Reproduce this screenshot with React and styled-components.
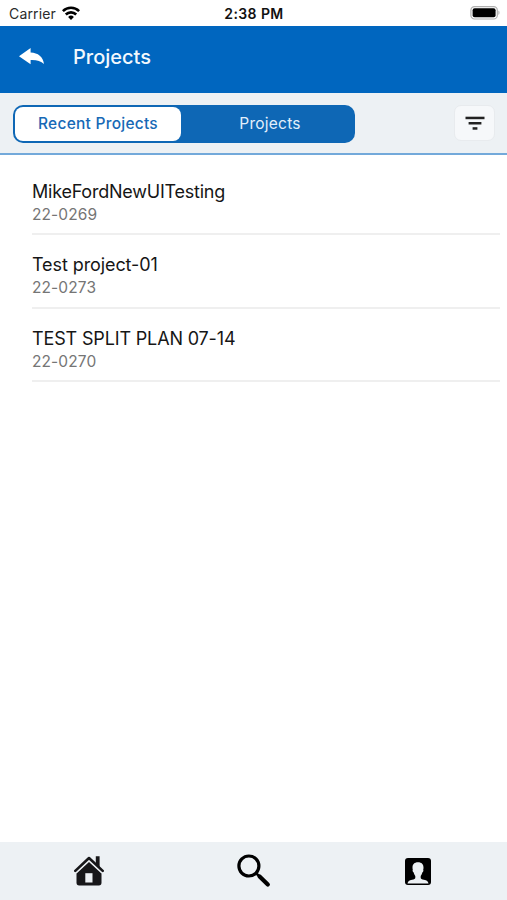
import styled, { createGlobalStyle } from 'styled-components'

const projects = [
	{ name: 'MikeFordNewUITesting', number: '22-0269', spacing: '-0.23px' },
	{ name: 'Test project-01', number: '22-0273', spacing: '-0.09px' },
	{ name: 'TEST SPLIT PLAN 07-14', number: '22-0270', spacing: '-0.15px' },
]

const App = () => {
	return (
		<Screen>
			<GlobalStyle />
			<StatusBar>
				<Carrier>
					<span>Carrier</span>
					<WifiIcon />
				</Carrier>
				<Time>2:38 PM</Time>
				<BatteryIcon />
			</StatusBar>

			<Header>
				<BackIcon />
				<Title>Projects</Title>
			</Header>

			<Toolbar>
				<Segmented>
					<Segment $active>Recent Projects</Segment>
					<Segment>Projects</Segment>
				</Segmented>
				<FilterButton aria-label="Filter">
					<FilterIcon />
				</FilterButton>
			</Toolbar>

			<List>
				{projects.map((project) => (
					<Row key={project.number}>
						<Name $spacing={project.spacing}>{project.name}</Name>
						<Number>{project.number}</Number>
					</Row>
				))}
			</List>

			<TabBar>
				<Tab aria-label="Home">
					<HomeIcon />
				</Tab>
				<Tab aria-label="Search">
					<SearchIcon />
				</Tab>
				<Tab aria-label="Profile">
					<ProfileIcon />
				</Tab>
			</TabBar>
		</Screen>
	)
}
export default App

const WifiIcon = () => (
	<svg width="18" height="14" viewBox="0 0 18 14" fill="none" stroke="#000" strokeWidth="2.6">
		<path d="M0.9 5.1a11.6 11.6 0 0 1 16.2 0" />
		<path d="M3.8 8.5a7.4 7.4 0 0 1 10.4 0" />
		<path d="M9 13.9 6.1 11a4.1 4.1 0 0 1 5.8 0z" fill="#000" stroke="none" />
	</svg>
)

const BatteryIcon = () => (
	<svg width="30" height="14" viewBox="0 0 30 14">
		<rect x="0.9" y="0.6" width="26.4" height="12.4" rx="3.6" fill="#fff" stroke="#b0b0b0" strokeWidth="1.2" />
		<rect x="2.6" y="2.3" width="23" height="9" rx="2" fill="#000" />
		<path d="M28.4 4.6c1.5.6 1.5 3.8 0 4.4z" fill="#b0b0b0" />
	</svg>
)

const BackIcon = () => (
	<svg width="26" height="17" viewBox="0 0 26 17" fill="#fff">
		<path d="M0 8.2 11.6 0v4.4c7.4.2 12.6 4.4 13.4 11.7-3.2-3.4-7.4-4.3-13.4-4.1v4.3z" />
	</svg>
)

const FilterIcon = () => (
	<svg width="20" height="14" viewBox="0 0 20 14" fill="#222">
		<rect x="0.5" y="0.7" width="19" height="2.5" />
		<rect x="3.6" y="6" width="12.8" height="2.5" />
		<rect x="7.6" y="11.2" width="4.8" height="2.5" />
	</svg>
)

const HomeIcon = () => (
	<svg width="30" height="30" viewBox="0 0 30 30" fill="#171719">
		<path d="M15 5.9 27.5 17.6v9.2c0 1.7-.9 2.7-2.6 2.7H5.1c-1.7 0-2.6-1-2.6-2.7v-9.2z" />
		<path d="M1 15.4 15 2.2l14 13.2" fill="none" stroke="#edf1f4" strokeWidth="4.6" />
		<path d="M1.3 14.9 15 2l13.7 12.9" fill="none" stroke="#171719" strokeWidth="2.6" strokeLinecap="round" strokeLinejoin="round" />
		<path d="M21.8 0.3h3.8v11.2l-3.8-3.4z" />
		<rect x="11.3" y="17.2" width="7.2" height="9.3" fill="#edf1f4" />
	</svg>
)

const SearchIcon = () => (
	<svg width="34" height="34" viewBox="0 0 34 34" fill="none" stroke="#000">
		<circle cx="11.9" cy="12" r="10" strokeWidth="3.2" />
		<path d="m19.1 19.2 3.2 3.2" strokeWidth="2.6" />
		<path d="m22.6 22.6 8.2 7.9" strokeWidth="4.2" strokeLinecap="round" />
	</svg>
)

const ProfileIcon = () => (
	<svg width="26" height="27" viewBox="0 0 26 27">
		<rect width="26" height="27" rx="3" fill="#000" />
		<path
			d="M13 4.3c3.7 0 5.5 2.1 5.5 5.3 0 .9-.1 1.5-.3 2.2.6.8-.1 2.3-.9 2.8-.3 1.5-1 2.6-1.6 3.4v1.7c0 1.2 1.2 1.6 3.2 2.1 3 .7 4.3 1.6 4.6 3.8h-21c.3-2.2 1.6-3.1 4.6-3.8 2-.5 3.2-.9 3.2-2.1V18c-.6-.8-1.3-1.9-1.6-3.4-.8-.5-1.5-2-.9-2.8-.2-.7-.3-1.3-.3-2.2 0-3.2 1.8-5.3 5.5-5.3z"
			fill="#edf1f4"
		/>
	</svg>
)

const GlobalStyle = createGlobalStyle`
	* {
		box-sizing: border-box;
	}

	body {
		margin: 0;
		background-color: #fff;
		font-family: Inter, 'Liberation Sans', sans-serif;
	}

	svg {
		display: block;
		flex-shrink: 0;
	}

	button {
		border: 0;
		padding: 0;
		font-family: inherit;
	}
`

const Screen = styled.div`
	display: flex;
	flex-direction: column;
	height: 100vh;
	min-height: 900px;
	background-color: #fff;
`

const StatusBar = styled.div`
	display: grid;
	grid-template-columns: 1fr auto 1fr;
	align-items: center;
	height: 26px;
	padding: 1px 7px 0 9px;

	> svg {
		justify-self: end;
		margin-top: -1px;
	}
`

const Carrier = styled.div`
	display: flex;
	align-items: center;
	gap: 6px;
	color: #2b2b2b;
	font-size: 14px;
	letter-spacing: 0.15px;

	svg {
		margin-top: -2px;
	}
`

const Time = styled.div`
	margin-right: 1px;
	color: #111;
	font-size: 14px;
	font-weight: 600;
	letter-spacing: 0.4px;
`

const Header = styled.header`
	display: flex;
	align-items: center;
	gap: 28px;
	height: 67px;
	padding: 0 19px 5px;
	background-color: #0066bf;

	svg {
		margin-top: -1px;
	}
`

const Title = styled.h1`
	margin: 0;
	color: #f2f8fd;
	font-size: 20px;
	font-weight: 500;
	line-height: 26px;
`

const Toolbar = styled.div`
	display: flex;
	align-items: center;
	justify-content: space-between;
	height: 62px;
	padding: 0 12px 0 13px;
	border-bottom: 2px solid #73a9da;
	background-color: #edf1f4;
`

const Segmented = styled.div`
	display: flex;
	width: 342px;
	height: 38px;
	margin-top: 1px;
	padding: 2px;
	border-radius: 10px;
	background-color: #0e67b5;
`

const Segment = styled.button`
	width: ${({ $active }) => ($active ? '166px' : '172px')};
	padding: ${({ $active }) => ($active ? '0' : '0 0 0 6px')};
	border-radius: 8px;
	background-color: ${({ $active }) => ($active ? '#fff' : 'transparent')};
	color: ${({ $active }) => ($active ? '#1769b6' : '#e2effb')};
	font-size: 15.5px;
	font-weight: ${({ $active }) => ($active ? 500 : 400)};
	letter-spacing: 0.25px;
`

const FilterButton = styled.button`
	display: flex;
	align-items: center;
	justify-content: center;
	width: 41px;
	height: 36px;
	border: 1px solid #e8ebee;
	border-radius: 7px;
	background-color: #f6f8fa;
`

const List = styled.main`
	flex: 1;
	padding: 7px 7px 0 32px;
`

const Row = styled.div`
	height: 73.3px;
	padding-top: 19px;
	border-bottom: 2px solid #efefef;
`

const Name = styled.div`
	color: #161616;
	font-size: 18px;
	line-height: 22px;
	letter-spacing: ${({ $spacing }) => $spacing};
`

const Number = styled.div`
	color: #757575;
	font-size: 15.5px;
	line-height: 24px;
	letter-spacing: 0.1px;
`

const TabBar = styled.nav`
	display: grid;
	grid-template-columns: 178px 151px 178px;
	height: 58px;
	background-color: #edf1f4;
`

const Tab = styled.button`
	display: flex;
	align-items: center;
	justify-content: center;
	background-color: transparent;
`
